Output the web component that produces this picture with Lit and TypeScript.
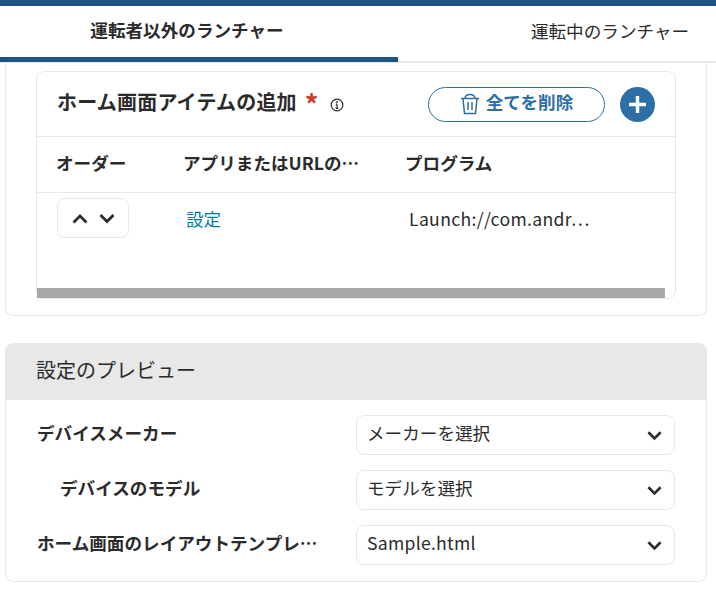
import { LitElement, html, css, svg } from "lit";
import { customElement } from "lit/decorators.js";

const chevDown = svg`<path d="M1.5 2 L8 8.5 L14.5 2" fill="none" stroke="currentColor" stroke-width="2.8"/>`;
const chevUp = svg`<path d="M1.5 9.5 L8 3 L14.5 9.5" fill="none" stroke="currentColor" stroke-width="2.8"/>`;

@customElement("app-root")
export class AppRoot extends LitElement {
  static styles = css`
    :host { display: block; width: 716px; height: 589px; overflow: hidden; background: #fff; color: #2b2b2b;
      font-family: "Noto Sans CJK JP", "Noto Sans", sans-serif; font-size: 17.6px; }
    * { box-sizing: border-box; }
    .topbar { height: 6px; background: #1f5585; }
    .tabs { display: flex; height: 57px; border-bottom: 2px solid #e8e8e8; }
    .tab { display: flex; align-items: center; justify-content: center; height: 55px; padding-bottom: 7px; white-space: nowrap; }
    .tab.active { width: 398px; font-weight: 700; border-bottom: 5px solid #1f5585; height: 56px; padding: 0 24px 5px 0; margin-bottom: -1px; }
    .tab.other { flex: 1; padding-left: 106px; font-weight: 400; }
    .card1 { margin: 0 9px 0 5px; height: 253px; border: 1px solid #e8e8e8; border-top: 0; border-radius: 0 0 8px 8px; padding: 8px 30px 0; }
    .inner { height: 228px; border: 1px solid #e8e8e8; border-radius: 8px; display: flex; flex-direction: column; }
    .head { height: 65px; display: flex; align-items: center; padding: 0 20px; border-bottom: 1px solid #e8e8e8; }
    .title { font-size: 20px; font-weight: 700; padding-bottom: 6px; letter-spacing: .2px; }
    .star { color: #c8402a; font-size: 27px; font-weight: 700; margin-left: 8px; padding-bottom: 2px; }
    .info { margin-left: 11px; margin-top: 2px; width: 14px; height: 14px; }
    .del { margin-left: auto; width: 177px; height: 35px; border: 1px solid #2c6ea6; border-radius: 18px; display: flex; align-items: center; justify-content: center; gap: 6px; color: #2c6ea6; font-weight: 700; font-size: 17.6px; }
    .del span { padding-bottom: 5px; }
    .add { margin-left: 15px; width: 35px; height: 35px; border-radius: 50%; background: #2c6ea6; display: flex; align-items: center; justify-content: center; }
    .row { display: grid; grid-template-columns: 127px 222px 1fr; padding-left: 19px; }
    .thead { height: 56px; align-items: center; font-weight: 700; border-bottom: 1px solid #e8e8e8; margin-bottom: 5px; padding-bottom: 5px; }
    .body { flex: 1; align-items: flex-start; }
    .order { width: 72px; height: 40px; border: 1px solid #e8e8e8; border-radius: 8px; display: flex; align-items: center; justify-content: center; gap: 11px; color: #2b2b2b; margin-left: 1px; }
    .link { color: #007fa8; margin-left: 3px; line-height: 42px; }
    .prog { margin-left: 4px; line-height: 42px; letter-spacing: .33px; white-space: nowrap; }
    .scroll { height: 10px; width: 628px; background: #a8a8a8; }
    .card2 { margin: 27px 9px 0 5px; height: 239px; border: 1px solid #e8e8e8; border-radius: 8px; overflow: hidden; }
    .chead { background: #e8e8e8; display: flex; align-items: center; padding: 0 0 5px 31px; font-size: 20px; margin: -1px -1px 0; height: 57px; }
    .form { display: flex; flex-direction: column; gap: 15px; padding: 15px 31px 0 31px; }
    .frow { display: grid; grid-template-columns: 319px 319px; align-items: center; height: 40px; }
    .lab { font-weight: 700; white-space: nowrap; padding-bottom: 5px; }
    .lab.ind { padding-left: 23px; }
    .sel { height: 40px; border: 1px solid #e8e8e8; border-radius: 8px; display: flex; align-items: center; justify-content: space-between; padding: 0 12px 0 10px; }
    .sel span { padding-bottom: 5px; }
    .sel .latin { letter-spacing: .27px; }
  `;

  private sel(t: string, latin = false) {
    return html`<div class="sel"><span class=${latin ? "latin" : ""}>${t}</span><svg width="15" height="11" viewBox="0 0 16 11">${chevDown}</svg></div>`;
  }

  render() {
    return html`
      <div class="topbar"></div>
      <div class="tabs">
        <div class="tab active">運転者以外のランチャー</div>
        <div class="tab other">運転中のランチャー</div>
      </div>
      <div class="card1">
        <div class="inner">
          <div class="head">
            <span class="title">ホーム画面アイテムの追加</span>
            <span class="star">*</span>
            <svg class="info" viewBox="0 0 14 14"><circle cx="7" cy="7" r="5.8" fill="none" stroke="#2b2b2b" stroke-width="1.2"/><path d="M7 6.2V10.4M5.6 10.4H8.4M5.8 6.2H7" fill="none" stroke="#2b2b2b" stroke-width="1.2"/><circle cx="7" cy="4" r="0.9" fill="#2b2b2b"/></svg>
            <div class="del">
              <svg width="20" height="22" viewBox="0 0 20 22" fill="none" stroke="#2c6ea6" stroke-width="1.5"><path d="M1 5.5H19M3 5.5L4.5 20.5H15.5L17 5.5M5 5.5C5 2 7 1.5 10 1.5S15 2 15 5.5M8 9V17M12 9V17"/></svg>
              <span>全てを削除</span>
            </div>
            <div class="add"><svg width="21" height="21" viewBox="0 0 21 21"><path d="M10.5 2V19M2 10.5H19" stroke="#fff" stroke-width="3.4"/></svg></div>
          </div>
          <div class="row thead"><span>オーダー</span><span>アプリまたはURLの⋯</span><span>プログラム</span></div>
          <div class="row body">
            <div class="order">
              <svg width="16" height="11" viewBox="0 0 16 11">${chevUp}</svg>
              <svg width="16" height="11" viewBox="0 0 16 11">${chevDown}</svg>
            </div>
            <span class="link">設定</span>
            <span class="prog">Launch://com.andr⋯</span>
          </div>
          <div class="scroll"></div>
        </div>
      </div>
      <div class="card2">
        <div class="chead">設定のプレビュー</div>
        <div class="form">
          <div class="frow"><span class="lab">デバイスメーカー</span>${this.sel("メーカーを選択")}</div>
          <div class="frow"><span class="lab ind">デバイスのモデル</span>${this.sel("モデルを選択")}</div>
          <div class="frow"><span class="lab">ホーム画面のレイアウトテンプレ⋯</span>${this.sel("Sample.html", true)}</div>
        </div>
      </div>
    `;
  }
}
